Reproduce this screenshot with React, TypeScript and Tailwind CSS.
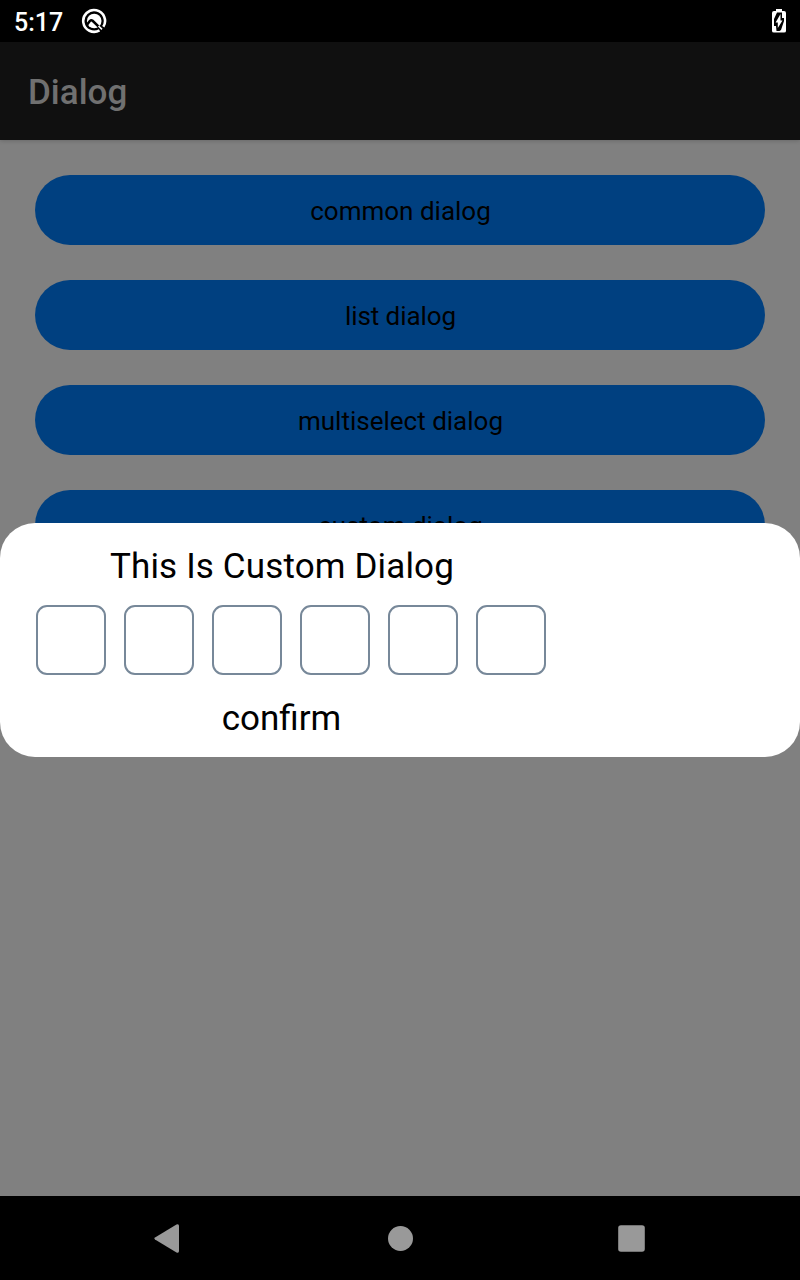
const actions = [
  { label: "common dialog", tracking: "tracking-normal" },
  { label: "list dialog", tracking: "tracking-[-0.1px]" },
  { label: "multiselect dialog", tracking: "tracking-normal" },
  { label: "custom dialog", tracking: "tracking-normal" },
];
const digits = [0, 1, 2, 3, 4, 5];

function StatusBar() {
  return (
    <header className="flex h-[42px] items-center bg-black pl-[14px] pr-[13px] text-white">
      <span className="pt-[4px] text-[25px] font-medium leading-[40px]">5:17</span>
      <svg className="ml-[18px]" width="26" height="26" viewBox="0 0 26 26" fill="none">
        <path d="M18.5 22.4 A10.9 10.9 0 1 1 22.3 18.8" stroke="white" strokeWidth="2.6" />
        <circle cx="13.2" cy="13" r="7.3" fill="white" />
        <path d="M6 16.8 L9 12.8 Q10.2 11.6 11.6 12.8 L21 21.8" stroke="black" strokeWidth="2.5" />
        <path d="M17.5 18 L21 21.3" stroke="white" strokeWidth="1.6" />
      </svg>
      <svg className="ml-auto" width="16" height="24" viewBox="0 0 16 24">
        <path d="M5 0h6v2h2q2 0 2 2v18q0 1.5-2 1.5H3q-2 0-2-1.5V4q0-2 2-2h2z" fill="white" />
        <path d="M6 3.5h5v5.5h2v3l-3 9-1.5 1H5.5l-.5-5H3V10z" fill="black" />
        <path d="M9.5 5v6.5h2L6.8 19v-5.5H4.6z" fill="white" />
      </svg>
    </header>
  );
}

function CustomDialog() {
  return (
    <section className="absolute inset-x-0 top-[523px] h-[234px] rounded-[35px] bg-white pl-[36px] text-black">
      <div className="flex w-[510px] flex-col">
        <h2 className="mt-[23px] ml-[-18px] text-center text-[35px] leading-[42px] tracking-[0.15px]">This Is Custom Dialog</h2>
        <div className="mt-[17px] flex gap-[18px]">
          {digits.map((d) => (
            <div key={d} className="size-[70px] rounded-[11px] border-2 border-[#778899]" />
          ))}
        </div>
        <button className="mt-[23px] ml-[-19px] text-center text-[35px] leading-[42px]">confirm</button>
      </div>
    </section>
  );
}

function NavigationBar() {
  return (
    <nav className="h-[84px] bg-black">
      <svg width="800" height="84" viewBox="0 0 800 84" fill="#999">
        <path d="M155 41.5 L176.5 28.5 Q179 27.5 179 30 V55 Q179 57.5 176.5 56.5 L155 43.5 Q153.5 42.5 155 41.5Z" />
        <circle cx="400.5" cy="42.5" r="12.5" />
        <rect x="618.2" y="29.2" width="26.6" height="26.6" rx="2.8" />
      </svg>
    </nav>
  );
}

export default function App() {
  return (
    <div className="relative flex h-[1280px] w-[800px] flex-col overflow-hidden bg-[#808080] font-['Roboto',sans-serif]">
      <StatusBar />
      <div className="z-10 flex h-[98px] items-center bg-[#101010] pl-[28px] pt-[4px] shadow-[0_1px_4px_rgba(0,0,0,0.18)]">
        <h1 className="text-[35px] font-medium leading-[42px] text-[#707070]">Dialog</h1>
      </div>
      <main className="flex flex-1 flex-col gap-[35px] p-[35px]">
        {actions.map(({ label, tracking }) => (
          <button key={label} className={`h-[70px] rounded-full bg-[#004080] pt-[2px] pl-[1px] text-[26px] text-black ${tracking}`}>
            {label}
          </button>
        ))}
      </main>
      <NavigationBar />
      <CustomDialog />
    </div>
  );
}
